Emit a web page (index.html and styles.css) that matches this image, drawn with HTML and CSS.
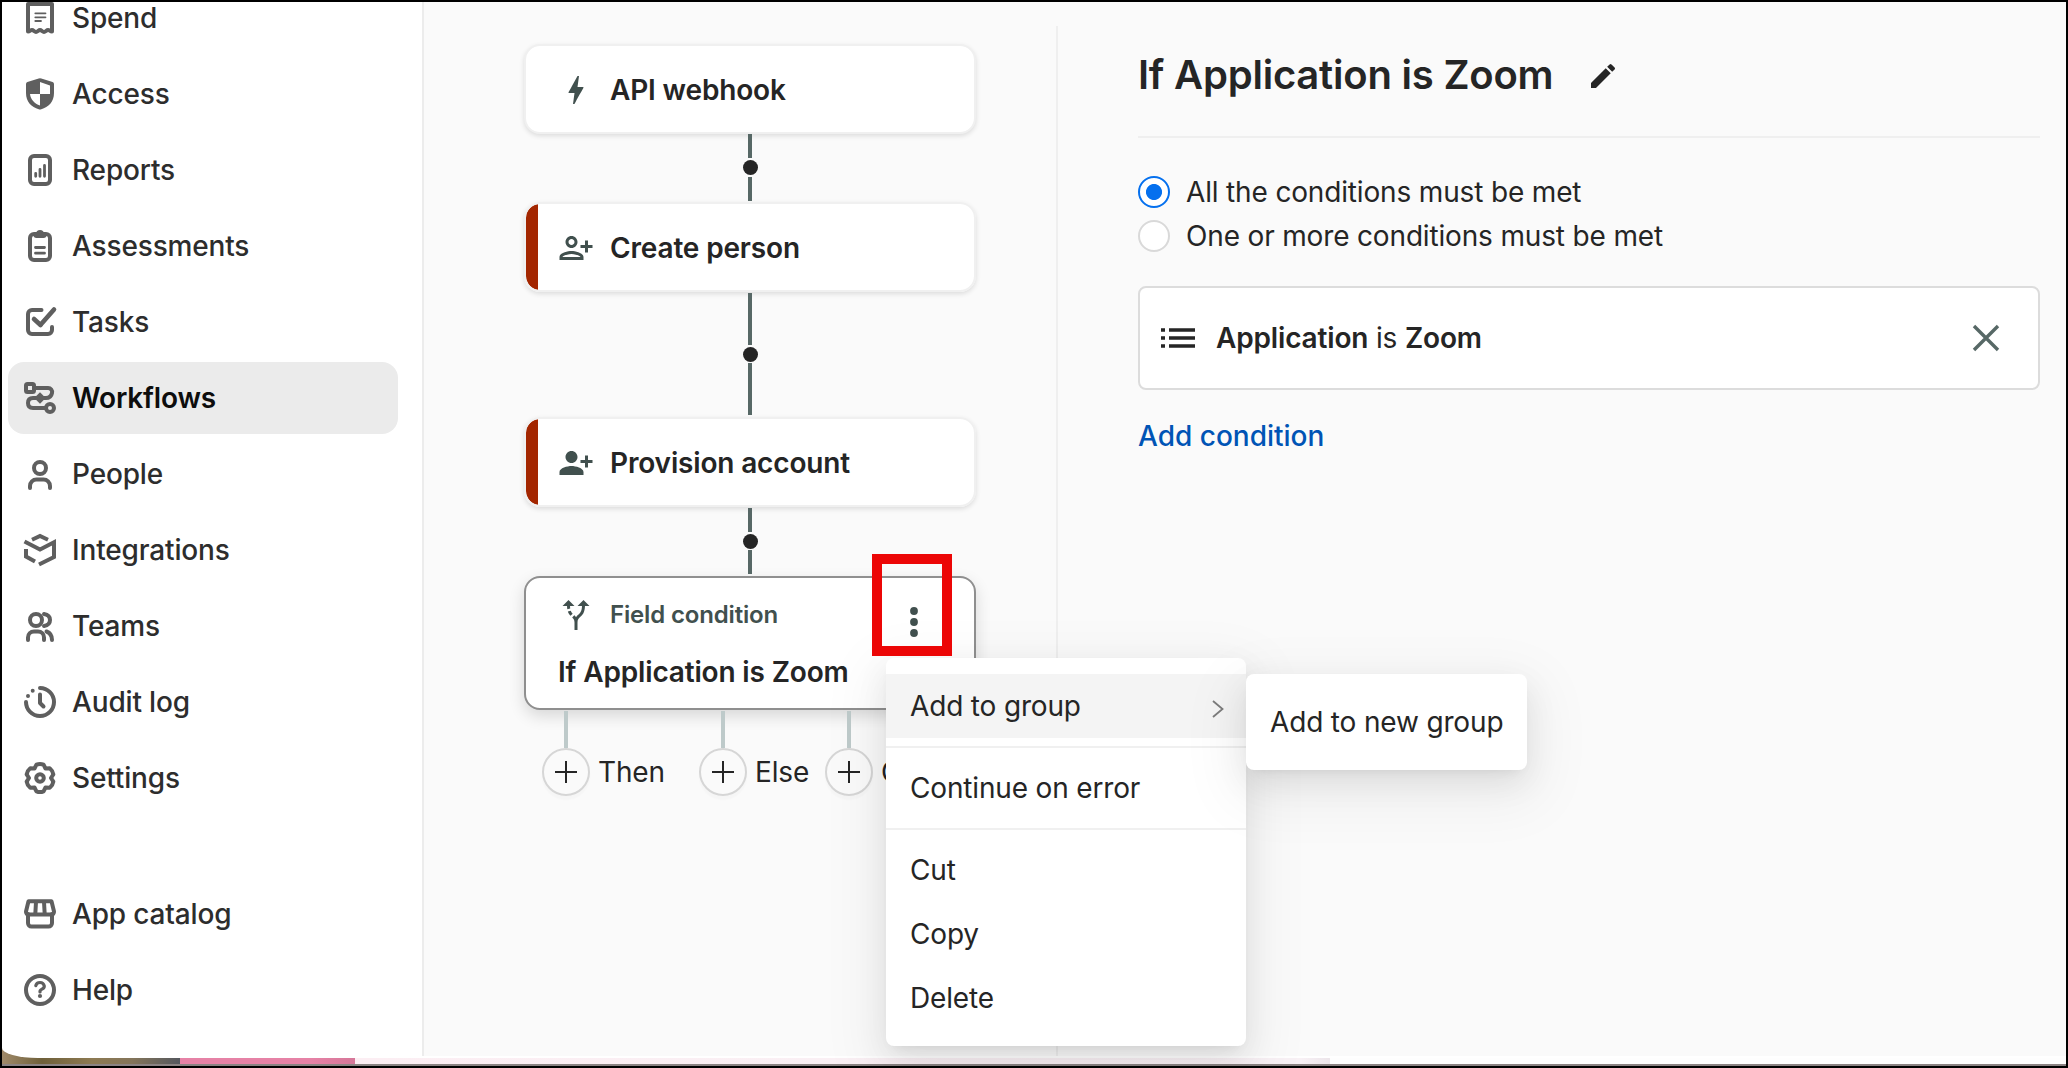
FILE: index.html
```html
<!DOCTYPE html>
<html lang="en">
<head>
<meta charset="utf-8">
<title>Workflows</title>
<link rel="stylesheet" href="styles.css">
</head>
<body>
<div class="frame">
  <div class="app">
    <nav class="sidebar">
      <a class="nav-item"><svg class="nav-icon" viewBox="0 0 32 32"><path d="M4 29.500V2h24v27.500c-2 0-2.500-1.500-4-1.500s-2.500 2-4 2-2.500-2-4-2-2.500 2-4 2-2.500-2-4-2-2 1.500-4 1.500z"/><path class="thin" d="M11.300 11.300H21.500M11.300 15.300H21.500M11.300 19H17"/></svg>Spend</a>
      <a class="nav-item"><svg class="nav-icon" viewBox="0 0 32 32"><path class="solid" fill-rule="evenodd" d="M14.700.4q1.300-.5 2.600 0L28.600 4Q30 4.500 30 6v9c0 9-5.500 14-12.700 16.200q-1.300.5-2.600 0C7.500 29 2 24 2 15V6q0-1.500 1.400-2zM16 4v12h10V7.500zM16 16H6c.5 5.500 4.500 9.500 10 11.500z"/></svg>Access</a>
      <a class="nav-item"><svg class="nav-icon" viewBox="0 0 32 32"><rect x="6" y="2" width="20" height="28" rx="4"/><path class="mid" d="M11.700 19.300v3M16 15.300v7M20.500 11.500v10.800"/></svg>Reports</a>
      <a class="nav-item"><svg class="nav-icon" viewBox="0 0 32 32"><rect x="6" y="4" width="20" height="26" rx="4"/><path class="solid" d="M9.500 4h2q1-4 4.500-4t4.500 4h2v1q0 3-3 3h-7q-3 0-3-3z"/><path class="mid" d="M11.500 17.500h9M11.500 23.200h9"/></svg>Assessments</a>
      <a class="nav-item"><svg class="nav-icon" viewBox="0 0 32 32"><path d="M17.500 4H8a4 4 0 0 0-4 4v16a4 4 0 0 0 4 4h16a4 4 0 0 0 4-4v-3"/><path class="heavy" d="M10 13l6.500 6"/><path class="heavy" d="M16.800 18.500L30 3.500"/></svg>Tasks</a>
      <a class="nav-item active"><svg class="nav-icon" viewBox="0 0 32 32"><rect x="2" y="2" width="8" height="8" rx="1.500"/><path d="M11 6h13a4 4 0 0 1 4 5q-1 5-6 5H9q-5 0-5 5t5 5h12"/><circle cx="26" cy="26" r="4"/><path class="solid" d="M16 10.300l5.700 5.700L16 21.700 10.300 16z"/></svg>Workflows</a>
      <a class="nav-item"><svg class="nav-icon" viewBox="0 0 32 32"><circle cx="16" cy="10" r="6"/><path d="M6 30v-2a6.500 6.500 0 0 1 6.500-6.500h7A6.500 6.500 0 0 1 26 28v2"/></svg>People</a>
      <a class="nav-item"><svg class="nav-icon flat" viewBox="0 0 32 32"><path d="M8 5.700l8-3.700 8 3.700"/><path d="M.5 7.500L16 15.500l14-7.200V23l-15 7.500"/><path d="M2 15v7.500L11 27.500"/></svg>Integrations</a>
      <a class="nav-item"><svg class="nav-icon" viewBox="0 0 32 32"><circle cx="12" cy="10" r="6"/><path d="M4 30v-2.500a6 6 0 0 1 6-6h4a6 6 0 0 1 6 6V30"/><path d="M20 4q6 1 6 6t-6 6M22.500 21.500q5.500 2 5.500 8.500"/></svg>Teams</a>
      <a class="nav-item"><svg class="nav-icon" viewBox="0 0 32 32"><path d="M16 2a14 14 0 1 1-14 14"/><path d="M4 10v0M8.700 4.800v0"/><path d="M16 8.500v8.500l3.500 3.500"/></svg>Audit log</a>
      <a class="nav-item"><svg class="nav-icon" viewBox="0 0 32 32"><path d="M12.430 2.700Q16 1.300 19.570 2.700L21.500 6.470 25.760 6.240Q28.700 8.600 29.330 12.430L27 16 29.330 19.570Q28.700 23.400 25.760 25.760L21.500 25.530 19.570 29.300Q16 30.700 12.430 29.300L10.500 25.530 6.240 25.760Q3.300 23.400 2.670 19.570L5 16 2.670 12.430Q3.300 8.600 6.240 6.240L10.500 6.470z"/><circle cx="16" cy="16" r="3.800"/></svg>Settings</a>
      <a class="nav-item nav-gap"><svg class="nav-icon" viewBox="0 0 32 32"><path d="M4 16v9a3.500 3.500 0 0 0 3.500 3.500h17A3.500 3.500 0 0 0 28 25v-9"/><path d="M4.500 3.300h23L30 13.500q.3 3-3 3H5q-3.300 0-3-3z"/><path d="M12 4l-.7 12M20 4l.7 12"/></svg>App catalog</a>
      <a class="nav-item"><svg class="nav-icon" viewBox="0 0 32 32"><circle cx="16" cy="16" r="14"/><path class="q" d="M11.800 11.700Q12.500 8.500 16 8.500T20.300 12Q20.300 14 18 15.200T16 18"/><circle class="solid" cx="16" cy="22" r="2.100"/></svg>Help</a>
    </nav>

    <main class="canvas">
      <section class="step"><svg class="step-icon" viewBox="0 0 24 24"><path d="M11 21.300h-1l1-7.300H7.500c-.58 0-.57-.32-.38-.66.19-.34.05-.08.07-.12C8.480 10.940 10.420 7.540 13 2.700h1L13 10h3.500c.49 0 .56.33.47.51l-.07.15C12.960 17.550 11 21.300 11 21.300z"/></svg>API webhook</section>
      <div class="link"><i class="wire"></i><i class="dot"></i><i class="wire"></i></div>
      <section class="step flagged"><svg class="step-icon" viewBox="0 0 24 24"><path d="M13 8c0-2.210-1.790-4-4-4S5 5.790 5 8s1.790 4 4 4 4-1.790 4-4zm-2 0c0 1.100-.9 2-2 2s-2-.9-2-2 .9-2 2-2 2 .9 2 2zM1 18v2h16v-2c0-2.660-5.330-4-8-4s-8 1.340-8 4zm2 0c.2-.71 3.300-2 6-2 2.690 0 5.780 1.280 6 2H3zm17-3v-3h3v-2h-3V7h-2v3h-3v2h3v3h2z"/></svg>Create person</section>
      <div class="link tall"><i class="wire"></i><i class="dot"></i><i class="wire"></i></div>
      <section class="step flagged"><svg class="step-icon" viewBox="0 0 24 24"><path d="M13 8c0-2.210-1.790-4-4-4S5 5.790 5 8s1.790 4 4 4 4-1.790 4-4zm2 2v2h3v3h2v-3h3v-2h-3V7h-2v3h-3zM1 18v2h16v-2c0-2.660-5.330-4-8-4s-8 1.340-8 4z"/></svg>Provision account</section>
      <div class="link last"><i class="wire"></i><i class="dot"></i><i class="wire"></i></div>
      <section class="condition">
        <div class="condition-head"><svg class="step-icon" viewBox="0 0 24 24"><path d="M9.780 11.160l-1.420 1.420c-.68-.69-1.340-1.580-1.790-2.940l1.940-.49c.32.89.77 1.500 1.270 2.010zM11 6L7 2 3 6h3.020c.02.81.08 1.540.19 2.170l1.940-.49C8.080 7.200 8.030 6.630 8.020 6H11zm10 0l-4-4-4 4h2.990c-.1 3.680-1.280 4.750-2.540 5.880-.5.44-1.010.92-1.450 1.550-.34-.49-.73-.88-1.130-1.240L9.460 13.600c.93.85 1.540 1.540 1.540 3.400v5h2v-5c0-2.020.71-2.660 1.790-3.630 1.380-1.240 3.080-2.780 3.200-7.370H21z"/></svg>Field condition
          <svg class="more" viewBox="0 0 8 32"><circle cx="4" cy="5" r="3.900"/><circle cx="4" cy="16" r="3.900"/><circle cx="4" cy="27" r="3.900"/></svg>
        </div>
        <div class="condition-title">If Application is Zoom</div>
      </section>
      <div class="branches">
        <div class="branch then"><span class="stub"><i></i><b class="plus"></b></span>Then</div>
        <div class="branch else"><span class="stub"><i></i><b class="plus"></b></span>Else</div>
        <div class="branch"><span class="stub"><i></i><b class="plus"></b></span>O</div>
      </div>
    </main>

    <aside class="details">
      <header class="details-head"><h1>If Application is Zoom</h1><svg class="pencil" viewBox="0 0 24 24"><path d="M3 17.250V21h3.750L17.810 9.940l-3.750-3.750L3 17.250zM20.710 7.040a1 1 0 0 0 0-1.410l-2.340-2.340a1 1 0 0 0-1.410 0l-1.830 1.830 3.750 3.750 1.830-1.830z"/></svg></header>
      <div class="radios">
        <label class="radio checked"><i></i>All the conditions must be met</label>
        <label class="radio"><i></i>One or more conditions must be met</label>
      </div>
      <div class="rule">
        <svg class="list" viewBox="0 0 34 20"><path d="M0 2h4M8 2h26M0 10h4M8 10h26M0 18h4M8 18h26"/></svg>
        <span class="rule-text"><b>Application</b> is <b>Zoom</b></span>
        <svg class="close" viewBox="0 0 28 28"><path d="M2 2l24 24M26 2L2 26"/></svg>
      </div>
      <a class="add">Add condition</a>
    </aside>
  </div>
  <div class="desktop"><i class="photo"></i><i class="pink"></i><i class="blush"></i><i class="pale"></i></div>

  <div class="highlight"></div>
  <div class="menu">
    <div class="menu-item hover">Add to group<svg class="chev" viewBox="0 0 12 18"><path d="M1 1l9.500 8L1 17"/></svg></div>
    <hr>
    <div class="menu-item">Continue on error</div>
    <hr>
    <div class="menu-item">Cut</div>
    <div class="menu-item">Copy</div>
    <div class="menu-item">Delete</div>
  </div>
  <div class="menu submenu"><div class="menu-item">Add to new group</div></div>
</div>
</body>
</html>
```
FILE: styles.css
```css
* { box-sizing: border-box; }
body {
  margin: 0;
  font: 400 28px/32px Inter, "Liberation Sans", sans-serif;
  letter-spacing: -.16px;
  color: #252525;
}
.frame {
  position: relative;
  width: 2068px;
  height: 1068px;
  border: 2px solid #000;
  background: #fff;
  overflow: hidden;
}
.app {
  position: relative;
  z-index: 1;
  display: flex;
  height: 1056px;
  background: #fff;
  border-bottom-left-radius: 36px 10px;
}

/* sidebar */
.sidebar {
  width: 422px;
  height: 1054px;
  border-right: 2px solid #ececec;
  padding-left: 6px;
  overflow: hidden;
}
.nav-item {
  display: flex;
  align-items: center;
  gap: 16px;
  width: 390px;
  height: 72px;
  margin-bottom: 4px;
  padding-left: 16px;
  border-radius: 16px;
  font-weight: 500;
  color: #2d2d2d;
}
.nav-item:first-child { margin-top: -20px; }
.nav-item.active { background: #ebebeb; font-weight: 600; color: #0d0d0d; }
.nav-gap { margin-top: 64px; }
.nav-icon {
  flex: none;
  width: 32px;
  height: 32px;
  overflow: visible;
  fill: none;
  stroke: #5f5f5f;
  stroke-width: 4;
  stroke-linecap: round;
  stroke-linejoin: round;
}
.nav-icon.flat { stroke-linecap: butt; stroke-linejoin: miter; }
.nav-icon .thin { stroke-width: 1.8; }
.nav-icon .mid { stroke-width: 2.8; }
.nav-icon .heavy { stroke-width: 4.6; }
.nav-icon .q { stroke-width: 3.2; }
.nav-icon .solid { fill: #5f5f5f; stroke: none; }

/* workflow canvas */
.canvas {
  width: 632px;
  height: 1054px;
  padding: 42px 0 0 100px;
  background: #fafafa;
}
.step {
  display: flex;
  align-items: center;
  width: 452px;
  height: 90px;
  padding: 2px 0 0 32px;
  border: 2px solid #f0f0f0;
  border-radius: 16px;
  background: #fff;
  background-clip: padding-box;
  box-shadow: 0 2px 5px rgba(0, 0, 0, .12);
  font-weight: 600;
}
.step.flagged { background: linear-gradient(90deg, #a32600 12px, #fff 12px) padding-box; }
.step-icon {
  flex: none;
  width: 36px;
  height: 36px;
  margin-right: 16px;
  fill: #41504e;
}
.link {
  display: flex;
  flex-direction: column;
  align-items: center;
  justify-content: space-between;
  width: 452px;
  height: 67px;
  margin-bottom: 1px;
}
.link.tall { height: 122px; margin: 1px 0 2px; }
.link.last { height: 66px; margin: 1px 0 2px; }
.wire { width: 4px; height: 24px; background: #576866; }
.tall .wire { height: 52px; }
.dot { width: 15px; height: 15px; border-radius: 50%; background: #252525; }
.condition {
  width: 452px;
  height: 134px;
  padding: 19px 32px 0;
  border: 2px solid #8f8f8f;
  border-radius: 16px;
  background: #fff;
  box-shadow: 0 6px 16px rgba(0, 0, 0, .14);
}
.condition-head {
  display: flex;
  align-items: center;
  height: 36px;
  font-size: 24px;
  font-weight: 600;
  color: #41504e;
}
.more { width: 8px; height: 32px; margin: 14px 24px 0 auto; fill: #41504e; }
.condition-title { margin-top: 23px; font-weight: 600; }
.branches { display: flex; padding: 1px 0 0 18px; }
.branch {
  display: flex;
  align-items: flex-end;
  gap: 8px;
  width: 126px;
  line-height: 48px;
  white-space: nowrap;
}
.branch.then { width: 157px; }
.stub { flex: none; display: flex; flex-direction: column; align-items: center; }
.stub i { width: 4px; height: 37px; background: #becaca; }
.plus {
  width: 48px;
  height: 48px;
  border: 2px solid #d6d6d6;
  border-radius: 50%;
  background:
    linear-gradient(#252525, #252525) center / 22px 2px no-repeat,
    linear-gradient(#252525, #252525) center / 2px 22px no-repeat,
    #fafafa;
  box-shadow: 0 4px 2px rgba(0, 0, 0, .02);
}

/* condition details */
.details {
  flex: 1;
  height: 1054px;
  padding: 24px 26px 0 0;
  background: linear-gradient(#efefef, #efefef) 0 24px / 2px 100% no-repeat #fafafa;
}
.details > * { margin-left: 82px; }
.details-head {
  display: flex;
  align-items: center;
  height: 112px;
  padding-bottom: 12px;
  border-bottom: 2px solid #efefef;
}
h1 { margin: 0; font-size: 40px; line-height: 48px; font-weight: 600; letter-spacing: -.22px; }
.pencil { width: 32px; height: 32px; margin: 2px 0 0 34px; fill: #252525; }
.radios { display: flex; flex-direction: column; gap: 12px; margin-top: 38px; }
.radio { display: flex; align-items: center; gap: 16px; height: 32px; }
.radio i {
  width: 32px;
  height: 32px;
  border: 2px solid #d9d9d9;
  border-radius: 50%;
  background: #fff;
}
.radio.checked i { border-color: #0570ee; background: radial-gradient(circle, #0570ee 7.600px, #fff 8.400px); }
.rule {
  display: flex;
  align-items: center;
  height: 104px;
  margin-top: 34px;
  padding: 0 38px 0 21px;
  border: 2px solid #dcdcdc;
  border-radius: 8px;
  background: #fff;
}
.rule b { font-weight: 600; }
.list { width: 34px; height: 20px; stroke: #252525; stroke-width: 3.600; margin-right: 21px; }
.close { width: 28px; height: 28px; margin-left: auto; stroke: #576866; stroke-width: 3.400; }
.add { display: block; margin-top: 30px; font-weight: 500; letter-spacing: 0; color: #0054b5; }

/* desktop strip under the window */
.desktop {
  position: absolute;
  left: 0;
  right: 0;
  bottom: 0;
  display: flex;
  height: 20px;
  border-bottom: 2px solid #8b8383;
}
.photo { width: 178px; background: linear-gradient(90deg, #a08a6a, #6f603a 40px, #8d7a52 90px, #84755a 130px, #55585e); }
.pink { width: 175px; background: linear-gradient(90deg, #e682a6 75%, #d67799); }
.blush { width: 975px; background: linear-gradient(90deg, #fceef3, #f8f1f5 97%, #ece5ea); }
.pale { flex: 1; background: #fefefe; }

/* overlays */
.highlight {
  position: absolute;
  z-index: 3;
  left: 870px;
  top: 552px;
  width: 80px;
  height: 102px;
  border: 10px solid #ec0606;
}
.menu {
  position: absolute;
  z-index: 2;
  left: 884px;
  top: 656px;
  width: 360px;
  padding: 16px 0;
  border-radius: 8px;
  background: #fff;
  box-shadow: 0 12px 32px rgba(0, 0, 0, .08), 0 6px 12px -8px rgba(0, 0, 0, .12), 0 18px 56px 16px rgba(0, 0, 0, .05);
}
.submenu { left: 1244px; top: 672px; width: 281px; }
.menu-item {
  display: flex;
  align-items: center;
  justify-content: space-between;
  height: 64px;
  padding: 0 22px 0 24px;
  white-space: nowrap;
}
.menu-item.hover { background: #f4f4f4; }
.menu hr { height: 2px; margin: 8px 0; border: 0; background: #f0f0f0; }
.chev { width: 12px; height: 18px; margin-top: 6px; fill: none; stroke: #7c7c7c; stroke-width: 1.800; }
```
